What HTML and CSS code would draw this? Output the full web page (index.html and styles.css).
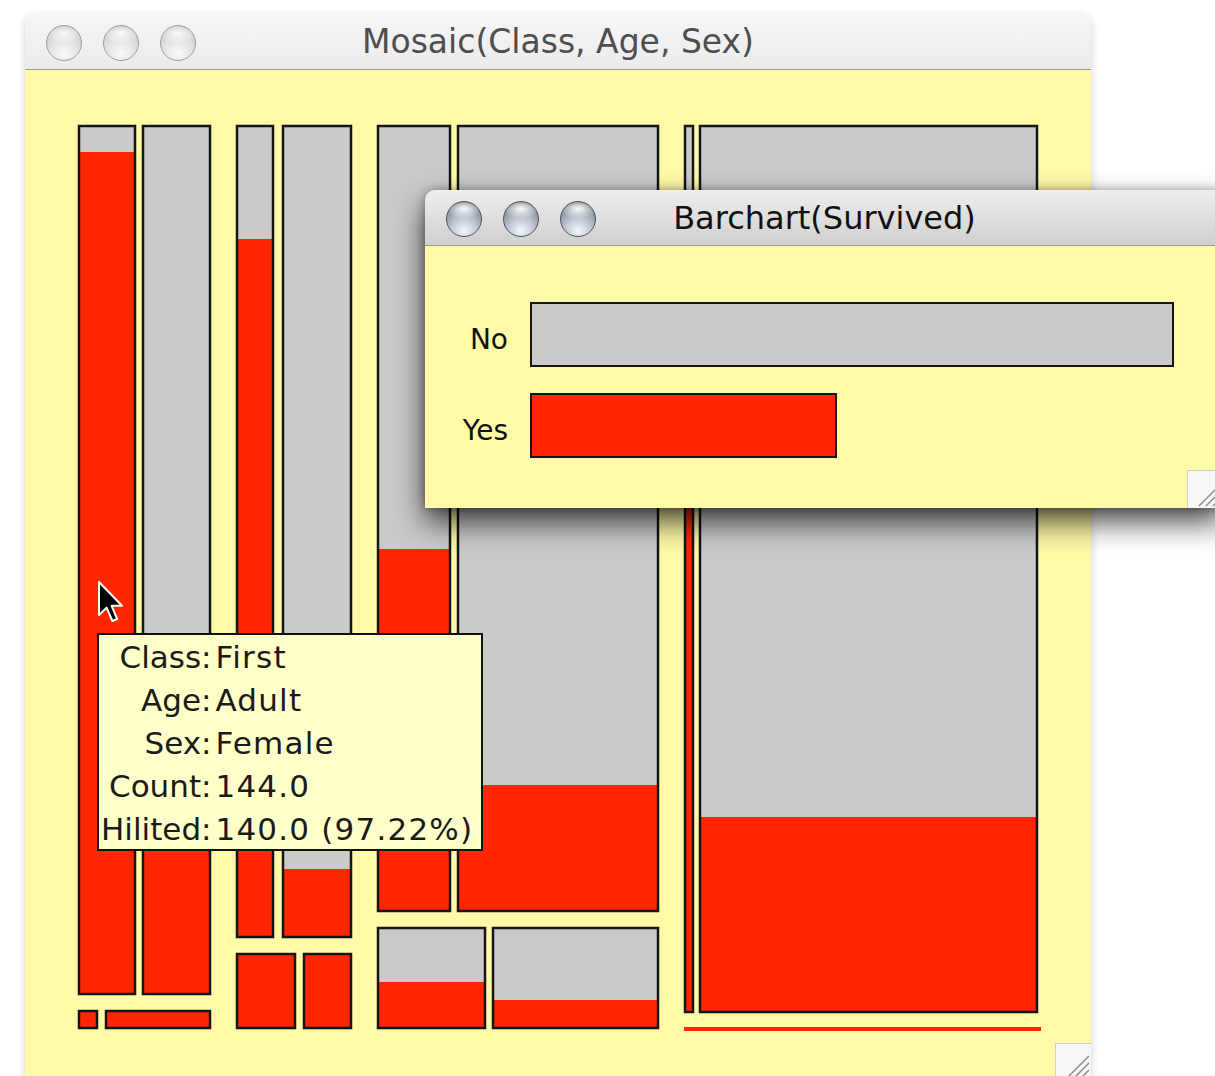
FILE: index.html
```html
<!DOCTYPE html>
<html lang="en">
<head>
<meta charset="utf-8">
<title>Mosaic and Barchart</title>
<link rel="stylesheet" href="styles.css">
</head>
<body>

<!-- Mosaic plot window (inactive) -->
<section class="window mosaic-window">
  <header class="titlebar inactive">
    <div class="buttons">
      <span class="btn btn-off"></span>
      <span class="btn btn-off"></span>
      <span class="btn btn-off"></span>
    </div>
    <h1 class="title">Mosaic(Class, Age, Sex)</h1>
    <span></span>
  </header>
  <div class="content">
    <svg class="mosaic" width="1066" height="1010" viewBox="25 70 1066 1010" xmlns="http://www.w3.org/2000/svg">
      <!-- First / Adult -->
      <rect class="no" x="78" y="125" width="58" height="870"/>
      <rect class="yes" x="78" y="152" width="58" height="843"/>
      <rect class="edge" x="79" y="126" width="56" height="868"/>
      <rect class="no" x="142" y="125" width="69" height="870"/>
      <rect class="yes" x="142" y="712" width="69" height="283"/>
      <rect class="edge" x="143" y="126" width="67" height="868"/>
      <!-- First / Child -->
      <rect class="yes" x="78" y="1010" width="20" height="19"/>
      <rect class="edge" x="79" y="1011" width="18" height="17"/>
      <rect class="yes" x="105" y="1010" width="106" height="19"/>
      <rect class="edge" x="106" y="1011" width="104" height="17"/>

      <!-- Second / Adult -->
      <rect class="no" x="236" y="125" width="38" height="813"/>
      <rect class="yes" x="236" y="239" width="38" height="699"/>
      <rect class="edge" x="237" y="126" width="36" height="811"/>
      <rect class="no" x="282" y="125" width="70" height="813"/>
      <rect class="yes" x="282" y="869" width="70" height="69"/>
      <rect class="edge" x="283" y="126" width="68" height="811"/>
      <!-- Second / Child -->
      <rect class="yes" x="236" y="953" width="60" height="76"/>
      <rect class="edge" x="237" y="954" width="58" height="74"/>
      <rect class="yes" x="303" y="953" width="49" height="76"/>
      <rect class="edge" x="304" y="954" width="47" height="74"/>

      <!-- Third / Adult -->
      <rect class="no" x="377" y="125" width="74" height="787"/>
      <rect class="yes" x="377" y="549" width="74" height="363"/>
      <rect class="edge" x="378" y="126" width="72" height="785"/>
      <rect class="no" x="457" y="125" width="202" height="787"/>
      <rect class="yes" x="457" y="785" width="202" height="127"/>
      <rect class="edge" x="458" y="126" width="200" height="785"/>
      <!-- Third / Child -->
      <rect class="no" x="377" y="927" width="109" height="102"/>
      <rect class="yes" x="377" y="982" width="109" height="47"/>
      <rect class="edge" x="378" y="928" width="107" height="100"/>
      <rect class="no" x="492" y="927" width="167" height="102"/>
      <rect class="yes" x="492" y="1000" width="167" height="29"/>
      <rect class="edge" x="493" y="928" width="165" height="100"/>

      <!-- Crew / Adult -->
      <rect class="no" x="684" y="125" width="10" height="888"/>
      <rect class="yes" x="684" y="240" width="10" height="773"/>
      <rect class="edge" x="685" y="126" width="8" height="886"/>
      <rect class="no" x="699" y="125" width="339" height="888"/>
      <rect class="yes" x="699" y="817" width="339" height="196"/>
      <rect class="edge" x="700" y="126" width="337" height="886"/>
      <!-- Crew / Child (empty cell) -->
      <rect class="yes" x="684" y="1027" width="357" height="4"/>
    </svg>

    <div class="tooltip">
      <span class="key">Class:</span><span class="val">First</span>
      <span class="key">Age:</span><span class="val">Adult</span>
      <span class="key">Sex:</span><span class="val">Female</span>
      <span class="key">Count:</span><span class="val">144.0</span>
      <span class="key">Hilited:</span><span class="val">140.0 (97.22%)</span>
    </div>

    <svg class="grip" width="36" height="37" viewBox="0 0 36 37" xmlns="http://www.w3.org/2000/svg">
      <rect x="0.5" y="0.5" width="36" height="37" fill="#f7f7f7" stroke="#cfcfcf"/>
      <path d="M12 35 L34 13 M19 35 L34 20 M26 35 L34 27" stroke="#8e8e8e" stroke-width="1.5"/>
      <path d="M13 36 L35 14 M20 36 L35 21 M27 36 L35 28" stroke="#ffffff" stroke-width="1"/>
    </svg>
  </div>
</section>

<!-- Barchart window (active) -->
<section class="window barchart-window">
  <header class="titlebar active">
    <div class="buttons">
      <span class="btn btn-on"></span>
      <span class="btn btn-on"></span>
      <span class="btn btn-on"></span>
    </div>
    <h1 class="title">Barchart(Survived)</h1>
    <span></span>
  </header>
  <div class="content bars">
    <span class="label">No</span>
    <div class="track"><div class="bar bar-no" style="width:100%"></div></div>
    <span class="label">Yes</span>
    <div class="track"><div class="bar bar-yes" style="width:47.7%"></div></div>

    <svg class="grip" width="37" height="38" viewBox="0 0 37 38" xmlns="http://www.w3.org/2000/svg">
      <rect x="0.5" y="0.5" width="37" height="38" fill="#f7f7f7" stroke="#cfcfcf"/>
      <path d="M12 36 L35 13 M19 36 L35 20 M26 36 L35 27" stroke="#8e8e8e" stroke-width="1.5"/>
      <path d="M13 37 L36 14 M20 37 L36 21 M27 37 L36 28" stroke="#ffffff" stroke-width="1"/>
    </svg>
  </div>
</section>

<!-- Mouse pointer -->
<svg class="pointer" width="30" height="46" viewBox="-1 -1 15 23" xmlns="http://www.w3.org/2000/svg">
  <path d="M0.5 0.5 L0.5 17 L4.3 13.3 L7.2 20 L9.6 19 L6.8 12.4 L12 12.4 Z" fill="#000" stroke="#fff" stroke-width="1" stroke-linejoin="round"/>
</svg>

</body>
</html>
```

FILE: styles.css
```css
* {
  box-sizing: border-box;
}

html,
body {
  margin: 0;
  padding: 0;
  width: 1215px;
  height: 1076px;
  overflow: hidden;
  background: #ffffff;
}

body {
  position: relative;
  font-family: "DejaVu Sans", "Liberation Sans", sans-serif;
}

/* ---------- windows ---------- */

.window {
  position: absolute;
  display: flex;
  flex-direction: column;
  border-radius: 10px 10px 0 0;
}

.mosaic-window {
  left: 25px;
  top: 14px;
  width: 1066px;
  height: 1066px;
  box-shadow: 0 2px 8px rgba(0, 0, 0, 0.18);
}

.barchart-window {
  left: 425px;
  top: 190px;
  width: 799px;
  height: 318px;
  box-shadow: 0 14px 30px rgba(0, 0, 0, 0.72), 0 0 10px rgba(0, 0, 0, 0.3);
}

.titlebar {
  flex: none;
  height: 56px;
  display: grid;
  grid-template-columns: 1fr auto 1fr;
  align-items: center;
  border-radius: 10px 10px 0 0;
  border-bottom: 1px solid #979797;
}

.titlebar.inactive {
  background: linear-gradient(#f6f6f6, #ebebeb);
}

.titlebar.active {
  background: linear-gradient(#eeeeee, #d0d0d0);
}

.title {
  margin: 0;
  font-weight: normal;
  white-space: nowrap;
}

.inactive .title {
  font-size: 33px;
  color: #4e4e4e;
}

.active .title {
  font-size: 32px;
  color: #111111;
}

.buttons {
  display: flex;
  gap: 21px;
  padding-left: 21px;
  padding-top: 2px;
}

.btn {
  width: 36px;
  height: 36px;
  border-radius: 50%;
}

.btn-off {
  border: 1px solid #9d9d9d;
  background:
    radial-gradient(ellipse 55% 30% at 50% 22%, rgba(255, 255, 255, 0.9), rgba(255, 255, 255, 0) 100%),
    radial-gradient(circle at 50% 80%, #fbfbfb 0%, #e2e2e2 45%, #c9c9c9 80%, #b4b4b4 100%);
}

.btn-on {
  border: 1px solid #4d535b;
  background:
    radial-gradient(ellipse 55% 30% at 50% 20%, rgba(255, 255, 255, 0.95), rgba(255, 255, 255, 0) 100%),
    radial-gradient(circle at 50% 85%, #f4f8fc 0%, #c3ccd7 35%, #8a94a1 70%, #5a616b 100%);
}

.content {
  flex: 1;
  position: relative;
  background: #fffaa8;
}

.grip {
  position: absolute;
  right: 0;
  bottom: 0;
}

/* ---------- mosaic ---------- */

.mosaic {
  display: block;
}

.mosaic .no {
  fill: #cacaca;
}

.mosaic .yes {
  fill: #ff2600;
}

.mosaic .edge {
  fill: none;
  stroke: #151515;
  stroke-width: 2.5;
}

.tooltip {
  position: absolute;
  left: 72px;
  top: 563px;
  width: 386px;
  height: 218px;
  padding: 1px 0 0 2px;
  background: #ffffc9;
  border: 2px solid #111111;
  display: grid;
  grid-template-columns: auto 1fr;
  column-gap: 4px;
  grid-auto-rows: 42.8px;
  align-items: center;
  font-size: 31px;
  color: #1a1a1a;
  white-space: nowrap;
}

.tooltip .key {
  text-align: right;
}

.tooltip .val {
  letter-spacing: 1.2px;
}

/* ---------- barchart ---------- */

.bars {
  display: grid;
  grid-template-columns: 83px 644px;
  grid-auto-rows: 65px;
  column-gap: 22px;
  row-gap: 26px;
  align-content: start;
  align-items: center;
  padding-top: 56px;
}

.label {
  text-align: right;
  font-size: 28px;
  color: #111111;
  padding-top: 10px;
}

.track {
  height: 100%;
}

.bar {
  height: 100%;
  border: 2px solid #151515;
}

.bar-no {
  background: #cacaca;
}

.bar-yes {
  background: #ff2600;
}

/* ---------- pointer ---------- */

.pointer {
  position: absolute;
  left: 96px;
  top: 579px;
}
```
